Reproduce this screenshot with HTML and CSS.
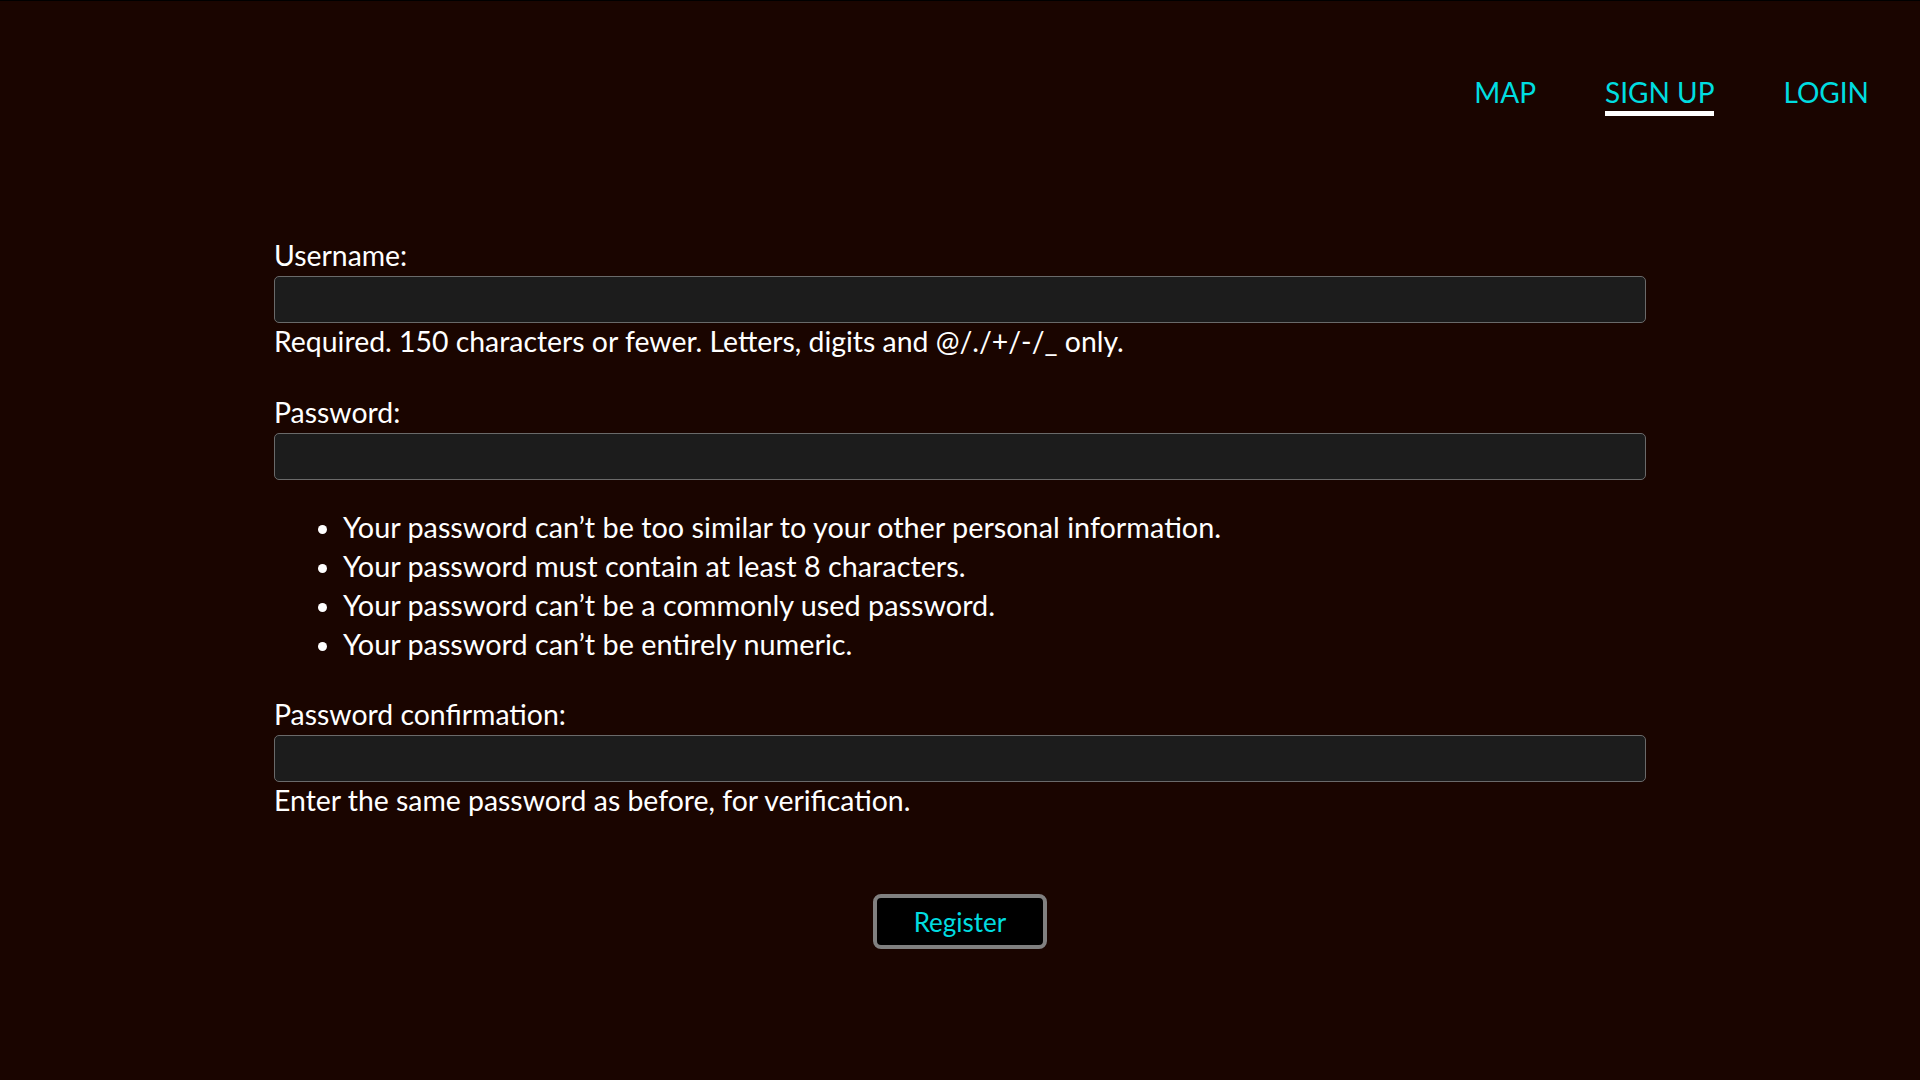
FILE: index.html
```html
<!DOCTYPE html>
<html lang="en">
<head>
<meta charset="utf-8">
<title>Sign up</title>
<link rel="stylesheet" href="styles.css">
</head>
<body>
<header class="topbar">
  <nav class="nav">
    <a class="nav-link" href="#">MAP</a>
    <a class="nav-link active" href="#">SIGN UP</a>
    <a class="nav-link" href="#">LOGIN</a>
  </nav>
</header>
<main class="content">
  <form class="signup">
    <div class="field">
      <label class="label" for="username">Username:</label>
      <input class="input" type="text" id="username">
      <span class="help">Required. 150 characters or fewer. Letters, digits and @/./+/-/_ only.</span>
    </div>
    <div class="field">
      <label class="label" for="password1">Password:</label>
      <input class="input" type="password" id="password1">
      <ul class="rules">
        <li>Your password can’t be too similar to your other personal information.</li>
        <li>Your password must contain at least 8 characters.</li>
        <li>Your password can’t be a commonly used password.</li>
        <li>Your password can’t be entirely numeric.</li>
      </ul>
    </div>
    <div class="field">
      <label class="label" for="password2">Password confirmation:</label>
      <input class="input" type="password" id="password2">
      <span class="help">Enter the same password as before, for verification.</span>
    </div>
    <div class="actions">
      <button class="btn" type="submit">Register</button>
    </div>
  </form>
</main>
</body>
</html>
```

FILE: styles.css
```css
html, body {
  margin: 0;
  padding: 0;
}
body {
  background: #1a0500;
  color: #ffffff;
  font-family: "Lato", "Noto Sans", sans-serif;
  min-height: 1080px;
  border-top: 1px solid #000;
  box-sizing: border-box;
}
.topbar {
  display: flex;
  justify-content: flex-end;
  padding: 74px 51px 0 0;
}
.nav {
  display: flex;
  gap: 69px;
}
.nav-link {
  color: #00dde0;
  text-decoration: none;
  font-size: 28px;
  line-height: 35px;
  padding-bottom: 1px;
  border-bottom: 5px solid transparent;
}
.nav-link.active {
  border-bottom-color: #ffffff;
}
.content {
  width: 1372px;
  margin: 0 auto;
  padding-top: 121px;
}
.signup {
  display: flex;
  flex-direction: column;
}
.field {
  display: flex;
  flex-direction: column;
  margin-bottom: 35px;
}
.label, .help {
  font-size: 28.4px;
  line-height: 36px;
}
.input {
  margin: 3px 0 0;
  height: 47px;
  box-sizing: border-box;
  background: #1c1c1c;
  border: 1px solid #6a6a6a;
  border-radius: 5px;
  color: #fff;
  font-size: 24px;
  padding: 0 10px;
}
.rules {
  margin: 28px 0 -3px;
  padding-left: 69px;
  font-size: 28.8px;
  line-height: 39px;
}
.actions {
  display: flex;
  justify-content: center;
  padding-top: 41px;
}
.btn {
  width: 174px;
  height: 55px;
  background: #000;
  border: 4px solid #808080;
  border-radius: 8px;
  color: #00dde0;
  font-family: "Lato", "Noto Sans", sans-serif;
  font-size: 26px;
  padding: 0;
}
```
